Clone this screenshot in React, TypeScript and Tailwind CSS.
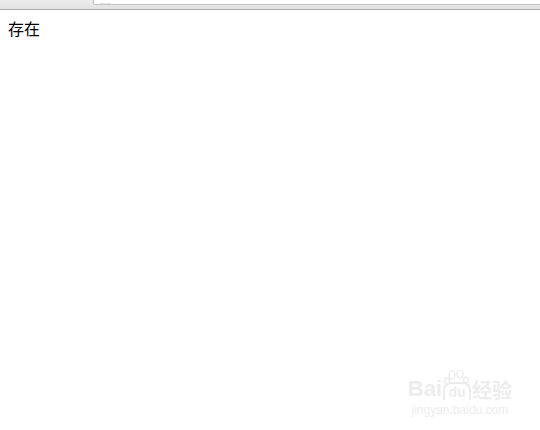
import React from "react";

const App: React.FC = () => {
  return (
    <div className="w-[540px] h-[430px] bg-white overflow-hidden flex flex-col font-['Noto_Sans_CJK_SC',sans-serif]">
      {/* browser chrome strip */}
      <div className="h-[10px] flex bg-gradient-to-b from-[#ececec] to-[#e2e2e2] border-b border-[#a9a9a9]">
        <div className="w-[93px]" />
        <div className="flex-1 h-[5px] bg-white border-l border-b border-[#c4c4c4] rounded-bl-[2px]">
          <div className="ml-[6px] w-[11px] h-[1px] mt-[3px] bg-[#e4e4e4]" />
        </div>
      </div>

      <div className="pl-[8px] pt-[8px] text-[16px] leading-[20px] text-black">存在</div>

      {/* watermark */}
      <div className="mt-auto mb-[12px] ml-auto mr-[28px] flex flex-col items-center text-[#ededed]">
        <div className="flex items-end">
          <span className="text-[22px] font-bold leading-none font-['Liberation_Sans',sans-serif]">Bai</span>
          <div className="flex flex-col items-center mx-[1px]">
            <svg width="28" height="14" viewBox="0 0 28 14" className="mb-[-2px]">
              <ellipse cx="9" cy="5" rx="3" ry="4" fill="none" stroke="#ececec" strokeWidth="1.5" />
              <ellipse cx="17" cy="4" rx="3" ry="4" fill="none" stroke="#ececec" strokeWidth="1.5" />
              <ellipse cx="4" cy="11" rx="2.5" ry="3" fill="none" stroke="#ececec" strokeWidth="1.5" />
              <ellipse cx="23" cy="10" rx="2.5" ry="3" fill="none" stroke="#ececec" strokeWidth="1.5" />
            </svg>
            <span className="px-[3px] rounded-t-[8px] border-2 border-b-0 border-[#ececec] text-[14px] font-bold leading-[16px] font-['Liberation_Sans',sans-serif]">du</span>
          </div>
          <span className="text-[20px] font-bold leading-none">经验</span>
        </div>
        <span className="text-[12px] leading-[16px] mt-[2px] font-['Liberation_Sans',sans-serif]">jingyan.baidu.com</span>
      </div>
    </div>
  );
};

export default App;
